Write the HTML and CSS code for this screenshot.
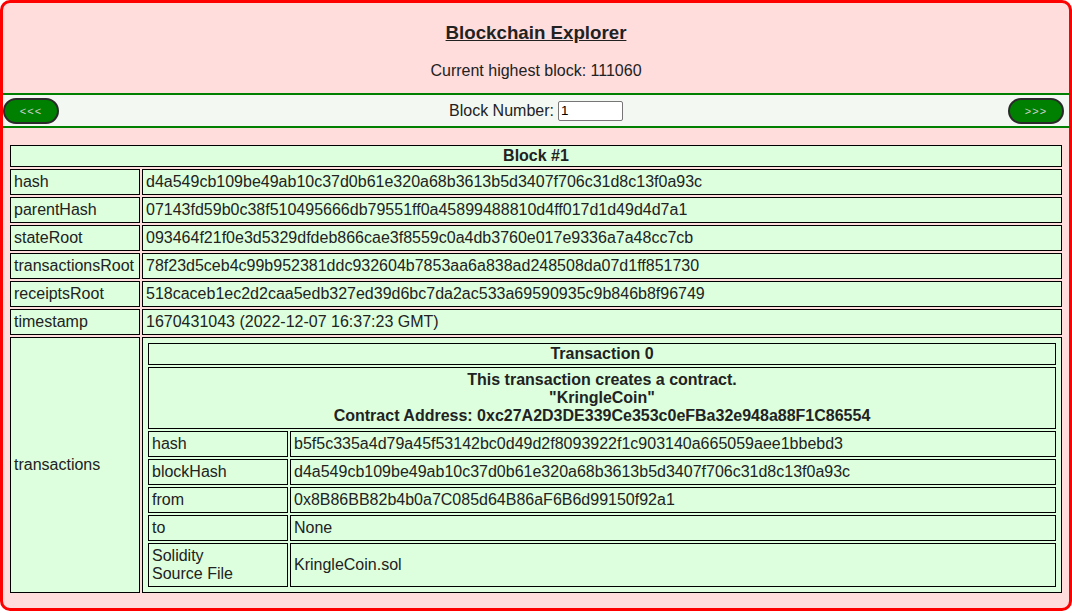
FILE: index.html
```html
<!DOCTYPE html>
<html>
<head>
<meta charset="utf-8">
<title>Blockchain Explorer</title>
<link rel="stylesheet" href="styles.css">
</head>
<body>
<div class="page">
  <header class="top">
    <h3 class="title">Blockchain Explorer</h3>
    <p class="highest">Current highest block: 111060</p>
  </header>
  <nav class="nav">
    <div class="nav-left"><button class="pill">&lt;&lt;&lt;</button></div>
    <label class="blocknum">Block Number: <input class="numinput" type="text" value="1"></label>
    <div class="nav-right"><button class="pill">&gt;&gt;&gt;</button></div>
  </nav>
  <table class="block">
    <tr><th colspan="2">Block #1</th></tr>
    <tr><td class="key">hash</td><td>d4a549cb109be49ab10c37d0b61e320a68b3613b5d3407f706c31d8c13f0a93c</td></tr>
    <tr><td class="key">parentHash</td><td>07143fd59b0c38f510495666db79551ff0a45899488810d4ff017d1d49d4d7a1</td></tr>
    <tr><td class="key">stateRoot</td><td>093464f21f0e3d5329dfdeb866cae3f8559c0a4db3760e017e9336a7a48cc7cb</td></tr>
    <tr><td class="key">transactionsRoot</td><td>78f23d5ceb4c99b952381ddc932604b7853aa6a838ad248508da07d1ff851730</td></tr>
    <tr><td class="key">receiptsRoot</td><td>518caceb1ec2d2caa5edb327ed39d6bc7da2ac533a69590935c9b846b8f96749</td></tr>
    <tr><td class="key">timestamp</td><td>1670431043 (2022-12-07 16:37:23 GMT)</td></tr>
    <tr>
      <td class="key">transactions</td>
      <td>
        <table class="tx">
          <tr><th colspan="2">Transaction 0</th></tr>
          <tr><td colspan="2" class="contract">This transaction creates a contract.<br>"KringleCoin"<br>Contract Address: 0xc27A2D3DE339Ce353c0eFBa32e948a88F1C86554</td></tr>
          <tr><td class="tkey">hash</td><td>b5f5c335a4d79a45f53142bc0d49d2f8093922f1c903140a665059aee1bbebd3</td></tr>
          <tr><td class="tkey">blockHash</td><td>d4a549cb109be49ab10c37d0b61e320a68b3613b5d3407f706c31d8c13f0a93c</td></tr>
          <tr><td class="tkey">from</td><td>0x8B86BB82b4b0a7C085d64B86aF6B6d99150f92a1</td></tr>
          <tr><td class="tkey">to</td><td>None</td></tr>
          <tr><td class="tkey">Solidity<br>Source File</td><td>KringleCoin.sol</td></tr>
        </table>
      </td>
    </tr>
  </table>
</div>
</body>
</html>
```

FILE: styles.css
```css
html, body {
  margin: 0;
  padding: 0;
}
body {
  font-family: "Liberation Sans", Arial, sans-serif;
  font-size: 16px;
  color: #222;
  background: #fff;
}
.page {
  border: 3px solid #ff0000;
  border-radius: 10px;
  background: #ffdddd;
  margin-bottom: 2px;
}
.top {
  text-align: center;
}
.title {
  margin: 19px 0 0;
  font-size: 18.72px;
  line-height: 21px;
  font-weight: bold;
  text-decoration: underline;
}
.highest {
  margin: 19px 0 0;
  line-height: 18px;
  padding-bottom: 13px;
}
.nav {
  display: grid;
  grid-template-columns: 1fr auto 1fr;
  align-items: center;
  border-top: 2px solid #008000;
  border-bottom: 2px solid #008000;
  background: #f3f8f3;
  height: 31px;
}
.nav-left {
  display: flex;
  justify-content: flex-start;
}
.nav-right {
  display: flex;
  justify-content: flex-end;
  padding-right: 5px;
}
.pill {
  width: 56px;
  height: 26px;
  border-radius: 13px;
  border: 2px solid #2a2a2a;
  background: #008000;
  color: #cfcfcf;
  font-family: "Liberation Sans", Arial, sans-serif;
  font-size: 11px;
  padding: 0;
  letter-spacing: 1px;
}
.blocknum {
  display: flex;
  align-items: center;
  gap: 4px;
  line-height: 18px;
}
.numinput {
  width: 59px;
  height: 16px;
  padding: 1px 2px;
  border: 1px solid #767676;
  border-radius: 2px;
  font-family: "Liberation Sans", Arial, sans-serif;
  font-size: 13.33px;
  color: #000;
  background: #fff;
}
.block {
  border-collapse: separate;
  border-spacing: 2px;
  width: calc(100% - 10px);
  margin: 15px 5px 13px;
}
.tx {
  border-collapse: separate;
  border-spacing: 2px;
  width: 100%;
}
th, td {
  border: 1px solid #000;
  background: #ddffdd;
  line-height: 18px;
  font-size: 16px;
}
th {
  padding: 1px;
  font-weight: bold;
  text-align: center;
}
td {
  padding: 3px;
  text-align: left;
  vertical-align: middle;
}
.key {
  width: 122px;
}
.tkey {
  width: 132px;
}
.contract {
  text-align: center;
  font-weight: bold;
}
```
